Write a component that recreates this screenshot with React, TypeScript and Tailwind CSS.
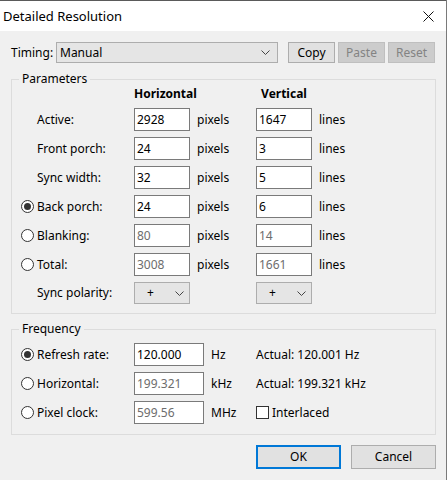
import React from 'react';

const ROWS = [
  { label: 'Active:', h: '2928', v: '1647' },
  { label: 'Front porch:', h: '24', v: '3' },
  { label: 'Sync width:', h: '32', v: '5' },
  { label: 'Back porch:', h: '24', v: '6', radio: true, checked: true },
  { label: 'Blanking:', h: '80', v: '14', radio: true, disabled: true },
  { label: 'Total:', h: '3008', v: '1661', radio: true, disabled: true },
];

const FREQ = [
  { label: 'Refresh rate:', value: '120.000', unit: 'Hz', checked: true, extra: 'Actual: 120.001 Hz' },
  { label: 'Horizontal:', value: '199.321', unit: 'kHz', disabled: true, extra: 'Actual: 199.321 kHz' },
  { label: 'Pixel clock:', value: '599.56', unit: 'MHz', disabled: true },
];

function Chevron() {
  return (
    <svg width="9" height="5" viewBox="0 0 9 5" className="shrink-0">
      <path d="M0.5 0.5 L4.5 4.5 L8.5 0.5" fill="none" stroke="#444" strokeWidth="1" />
    </svg>
  );
}

function Radio({ checked }: { checked?: boolean }) {
  return (
    <span className="flex h-[13px] w-[13px] items-center justify-center rounded-full border border-[#333] bg-white">
      {checked && <span className="h-[7px] w-[7px] rounded-full bg-[#333]" />}
    </span>
  );
}

function Field({ value, disabled, width }: { value: string; disabled?: boolean; width: string }) {
  return (
    <div
      className={`flex h-[23px] items-center border border-[#7a7a7a] bg-white pl-[2px] ${width} ${
        disabled ? 'text-[#6d6d6d]' : 'text-black'
      }`}
    >
      {value}
    </div>
  );
}

function Group({ title, children, className }: { title: string; children: React.ReactNode; className: string }) {
  return (
    <div className={`relative border border-[#dcdcdc] ${className}`}>
      <span className="absolute left-[7px] top-[-9px] bg-[#f0f0f0] px-[3px] leading-[16px]">{title}</span>
      {children}
    </div>
  );
}

function Polarity() {
  return (
    <div className="flex h-[22px] w-[56px] items-center justify-between border border-[#adadad] bg-[#e5e5e5] pl-[12px] pr-[5px]">
      <span>+</span>
      <Chevron />
    </div>
  );
}

export default function App() {
  return (
    <div className="h-[480px] w-[447px] overflow-hidden border-r border-[#7a7a7a] bg-[#f0f0f0] font-['Noto_Sans',sans-serif] text-[12px] leading-[16px] text-black">
      {/* Title bar */}
      <div className="flex h-[31px] items-center justify-between border-t border-[#5a5a5a] bg-white pl-[3px] pr-[12px]">
        <span className="text-[13px]">Detailed Resolution</span>
        <svg width="11" height="11" viewBox="0 0 11 11">
          <path d="M0.5 0.5 L10.5 10.5 M10.5 0.5 L0.5 10.5" stroke="#111" strokeWidth="1" />
        </svg>
      </div>

      <div className="pl-[11px] pr-[10px] pt-[11px]">
        {/* Timing */}
        <div className="flex h-[21px] items-center">
          <span className="w-[45px]">Timing:</span>
          <div className="flex h-[21px] w-[222px] items-center justify-between border border-[#adadad] bg-[#e5e5e5] pl-[3px] pr-[7px]">
            <span>Manual</span>
            <Chevron />
          </div>
          <button className="ml-[10px] h-[21px] w-[47px] border border-[#adadad] bg-[#e1e1e1]">Copy</button>
          <button className="ml-[3px] h-[21px] w-[47px] border border-[#bfbfbf] bg-[#cccccc] text-[#838383]">Paste</button>
          <button className="ml-[3px] h-[21px] w-[47px] border border-[#bfbfbf] bg-[#cccccc] text-[#838383]">Reset</button>
        </div>

        {/* Parameters */}
        <Group title="Parameters" className="mt-[16px] pb-[9px] pt-[6px]">
          <div className="flex h-[16px] items-center pl-[122px] font-bold">
            <span className="w-[56px] whitespace-nowrap text-center">Horizontal</span>
            <span className="w-[66px]" />
            <span className="w-[56px] whitespace-nowrap text-center">Vertical</span>
          </div>
          <div className="mt-[6px] flex flex-col gap-[6px] pl-[9px]">
            {ROWS.map((r) => (
              <div key={r.label} className="flex h-[23px] items-center">
                <span className="w-[16px]">{r.radio && <Radio checked={r.checked} />}</span>
                <span className="w-[97px]">{r.label}</span>
                <Field value={r.h} disabled={r.disabled} width="w-[56px]" />
                <span className="w-[66px] pl-[7px]">pixels</span>
                <Field value={r.v} disabled={r.disabled} width="w-[56px]" />
                <span className="pl-[7px]">lines</span>
              </div>
            ))}
            <div className="flex h-[22px] items-center">
              <span className="w-[16px]" />
              <span className="w-[97px]">Sync polarity:</span>
              <Polarity />
              <span className="w-[66px]" />
              <Polarity />
            </div>
          </div>
        </Group>

        {/* Frequency */}
        <Group title="Frequency" className="mt-[15px] pb-[10px] pt-[13px]">
          <div className="flex flex-col gap-[6px] pl-[9px]">
            {FREQ.map((f) => (
              <div key={f.label} className="flex h-[23px] items-center">
                <span className="w-[16px]">
                  <Radio checked={f.checked} />
                </span>
                <span className="w-[97px]">{f.label}</span>
                <Field value={f.value} disabled={f.disabled} width="w-[70px]" />
                <span className="w-[52px] pl-[7px]">{f.unit}</span>
                {f.extra ? (
                  <span>{f.extra}</span>
                ) : (
                  <span className="flex items-center">
                    <span className="h-[13px] w-[13px] border border-[#333] bg-white" />
                    <span className="pl-[3px]">Interlaced</span>
                  </span>
                )}
              </div>
            ))}
          </div>
        </Group>

        {/* Buttons */}
        <div className="mt-[10px] flex justify-end gap-[10px]">
          <button className="h-[24px] w-[85px] border-2 border-[#0078d7] bg-[#e1e1e1]">OK</button>
          <button className="h-[24px] w-[85px] border border-[#adadad] bg-[#e1e1e1]">Cancel</button>
        </div>
      </div>
    </div>
  );
}
